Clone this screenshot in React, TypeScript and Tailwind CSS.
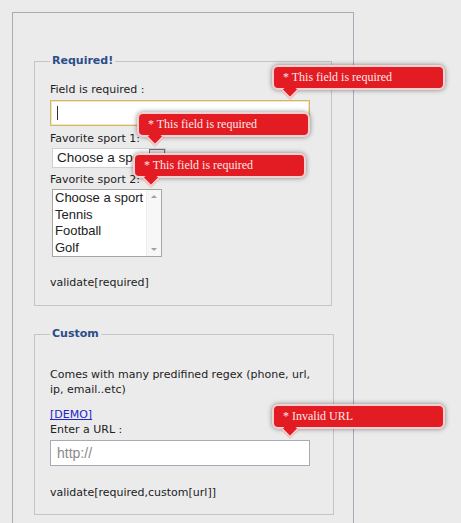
import React from "react";

const sans = "font-['DejaVu_Sans',Tahoma,sans-serif]";

function FormError({ left, top, text }: { left: number; top: number; text: string }) {
    return (
        <div
            className="absolute z-10 w-[173px] h-[25px] rounded-[6px] border-2 border-[#f5d0d0] bg-[#e31b22] shadow-[0_0_5px_rgba(0,0,0,0.45)]"
            style={{ left, top }}
        >
            <div className="pl-[9px] leading-[21px] text-[12px] text-[#fde8e8] font-['Liberation_Serif',serif] whitespace-nowrap">
                {text}
            </div>
            {/* arrow */}
            <div className="absolute left-[10px] bottom-[-9px] w-[12px] h-[12px] rotate-45 bg-[#e31b22] border-r-2 border-b-2 border-[#f5d0d0]" />
        </div>
    );
}

export default function App() {
    const sports = ["Choose a sport", "Tennis", "Football", "Golf"];

    return (
        <div className={`relative min-h-screen bg-[#ebebeb] pt-3 pl-3 text-[11px] text-[#222] ${sans}`}>
            {/* Outer panel */}
            <div className="w-[342px] border border-[#a9abb7] px-[21px] pt-[40px] pb-[20px]">

                {/* Required */}
                <fieldset className="border border-[#c3c4cc] px-[15px] pb-[14px]">
                    <legend className="px-[2px] leading-[16px] font-bold text-[#2b4d8a]">Required!</legend>
                    <div className="mt-[13px] leading-[16px]">Field is required :</div>
                    <div className="mt-[2px] h-[26px] w-[260px] border border-[#d6b46a] bg-white shadow-[inset_0_0_0_1px_#f3e6c4] flex items-center pl-[6px]">
                        <div className="w-px h-[14px] bg-[#333]" />
                    </div>

                    <div className="mt-[5px] leading-[16px]">Favorite sport 1:</div>
                    <div className="mt-[1px] ml-[2px] h-[20px] w-[114px] flex border border-[#d0d0d0] bg-white font-['Liberation_Sans',Arial,sans-serif]">
                        <div className="flex-1 text-[13.5px] leading-[18px] pl-[4px] whitespace-nowrap">Choose a sport</div>
                        <div className="w-[18px] border border-[#707070] bg-[#e6e6e6]" />
                    </div>

                    <div className="mt-[4px] leading-[16px]">Favorite sport 2:</div>
                    <div className="mt-[1px] ml-[2px] h-[68px] w-[110px] flex border border-[#a5a5a5] bg-white font-['Liberation_Sans',Arial,sans-serif]">
                        <div className="flex-1 pl-[2px] text-[13px] leading-[16.7px] whitespace-nowrap">
                            {sports.map((s) => (
                                <div key={s}>{s}</div>
                            ))}
                        </div>
                        <div className="w-[15px] bg-[#f7f7f7] border-l border-[#ededed] flex flex-col items-center justify-between py-[5px]">
                            <div className="w-0 h-0 border-x-[3px] border-x-transparent border-b-[3px] border-b-[#a0a0a0]" />
                            <div className="w-0 h-0 border-x-[3px] border-x-transparent border-t-[3px] border-t-[#a0a0a0]" />
                        </div>
                    </div>

                    <div className="mt-[18px] leading-[16px]">validate[required]</div>
                </fieldset>

                {/* Custom */}
                <fieldset className="mt-[20px] border border-[#c3c4cc] px-[15px] pb-[13px]">
                    <legend className="px-[2px] leading-[16px] font-bold text-[#2b4d8a]">Custom</legend>
                    <p className="mt-[25px] leading-[15px] w-[268px]">
                        Comes with many predifined regex (phone, url, ip, email..etc)
                    </p>
                    <a href="#" className="block mt-[10px] leading-[15px] w-fit text-[#2424c8] underline">[DEMO]</a>
                    <div className="leading-[15px]">Enter a URL :</div>
                    <div className="mt-[3px] h-[26px] w-[260px] border border-[#a8aab6] bg-white flex items-center pl-[6px] font-['Liberation_Sans',Arial,sans-serif] text-[14px] text-[#8a8a8a]">
                        http://
                    </div>
                    <div className="mt-[19px] leading-[16px]">validate[required,custom[url]]</div>
                </fieldset>
            </div>

            <FormError left={272} top={65} text="* This field is required" />
            <FormError left={137} top={112} text="* This field is required" />
            <FormError left={133} top={153} text="* This field is required" />
            <FormError left={272} top={404} text="* Invalid URL" />
        </div>
    );
}
